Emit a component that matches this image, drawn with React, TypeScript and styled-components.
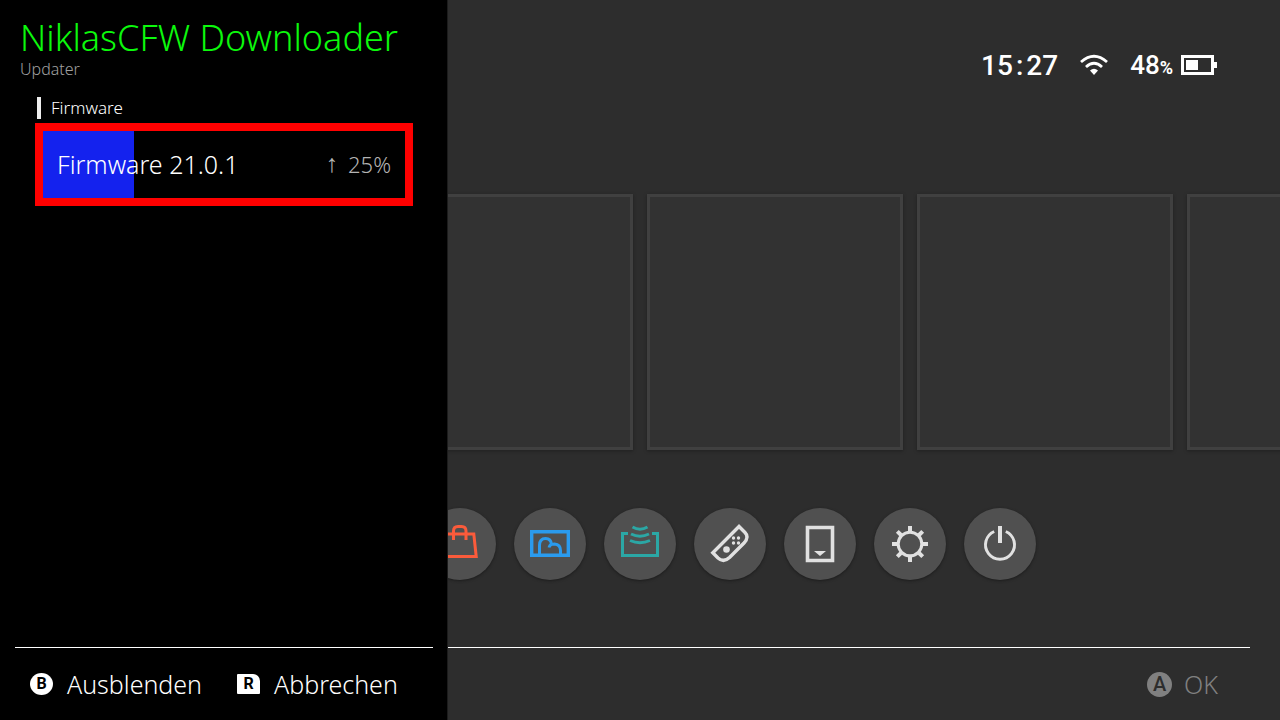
import React from 'react';
import styled, { createGlobalStyle } from 'styled-components';

const GlobalStyle = createGlobalStyle`
  *, *::before, *::after { box-sizing: border-box; }
  body {
    margin: 0;
    background: #2d2d2d;
    color: #fff;
    font-family: "Noto Sans", "Open Sans", sans-serif;
    font-weight: 300;
  }
  button {
    margin: 0;
    padding: 0;
    border: 0;
    background: none;
    color: inherit;
    font: inherit;
    cursor: pointer;
  }
  h1, h2, p, ul { margin: 0; padding: 0; font-weight: inherit; list-style: none; }
`;

const Screen = styled.div`
  display: flex;
  min-height: 100vh;
`;

const Panel = styled.section`
  display: flex;
  flex-direction: column;
  flex: none;
  width: 448px;
  padding: 0 14px 0 15px;
  background: #000;
  border-right: 1px solid #1c1c1c;
`;

const PanelHeader = styled.header`
  padding: 16px 5px 0;
`;

const Title = styled.h1`
  color: #0cf90c;
  font-size: 36px;
  line-height: 44px;
  white-space: nowrap;
`;

const Subtitle = styled.p`
  color: #a0a0a0;
  font-size: 16px;
  line-height: 18px;
`;

const Category = styled.h2`
  margin: 19px 22px 4px;
  padding-left: 10px;
  border-left: 4px solid #eee;
  font-size: 17px;
  line-height: 22px;
`;

const DownloadItem = styled.button`
  position: relative;
  display: flex;
  align-items: center;
  justify-content: space-between;
  margin: 0 20px;
  height: 83px;
  padding: 0 14px 2px;
  border: 8px solid #f00;
`;

const Progress = styled.span`
  position: absolute;
  inset: 0 auto 0 0;
  background: #1422ee;
`;

const ItemName = styled.span`
  position: relative;
  font-size: 25px;
`;

const ItemState = styled.span`
  position: relative;
  display: flex;
  align-items: center;
  gap: 10px;
  color: #b4b4b4;
  font-size: 22px;
`;

const Arrow = styled.span`
  font-family: "Liberation Sans", sans-serif;
  font-size: 25px;
`;

const Footer = styled.footer<{ $end?: boolean }>`
  display: flex;
  justify-content: ${(p) => (p.$end ? 'flex-end' : 'flex-start')};
  gap: 35px;
  height: 73px;
  margin-top: auto;
  padding: 0 ${(p) => (p.$end ? 32 : 15)}px;
  border-top: 1px solid #fff;
`;

const Hint = styled.button<{ $dim?: boolean }>`
  display: flex;
  align-items: center;
  gap: ${(p) => (p.$dim ? 12 : 14)}px;
  color: ${(p) => (p.$dim ? '#808080' : '#fff')};
  font-size: 25px;
  white-space: nowrap;
`;

const Key = styled.span<{ $shoulder?: boolean; $large?: boolean }>`
  display: flex;
  align-items: center;
  justify-content: center;
  width: ${(p) => (p.$large ? 25 : 23)}px;
  height: ${(p) => (p.$large ? 25 : p.$shoulder ? 20 : 22)}px;
  border-radius: ${(p) => (p.$shoulder ? '1px 7px 1px 1px' : '50%')};
  background: currentColor;

  span {
    color: ${(p) => (p.$large ? '#2d2d2d' : '#000')};
    font: ${(p) => (p.$large ? '500 20px' : '700 16px')}/20px Roboto, sans-serif;
  }
`;

const Home = styled.main`
  display: flex;
  flex: 1;
  flex-direction: column;
  min-width: 0;
  overflow: hidden;
`;

const StatusBar = styled.div`
  display: flex;
  align-items: center;
  justify-content: flex-end;
  height: 130px;
  padding-right: 63px;
  font-family: Roboto, sans-serif;
  font-weight: 500;
`;

const Clock = styled.time`
  display: flex;
  gap: 3px;
  margin-right: 22px;
  font-size: 28px;
`;

const Battery = styled.div`
  display: flex;
  align-items: center;
  gap: 8px;
  margin-left: 22px;
  font-size: 26px;

  small { font-size: 18px; font-weight: 700; }
`;

const Tiles = styled.ul`
  display: flex;
  gap: 14px;
  margin: 64px 0 58px -71px;
`;

const Tile = styled.li`
  flex: none;
  width: 256px;
  height: 256px;
  border: 3px solid #404040;
  background: #323232;
  box-shadow: 0 1px 3px #202020;
`;

const Dock = styled.nav`
  display: flex;
  gap: 18px;
  margin: 0 0 40px -24px;
`;

const DockButton = styled.button<{ $color?: string }>`
  flex: none;
  width: 72px;
  height: 72px;
  border-radius: 50%;
  background: #505050;
  box-shadow: 0 1px 3px #1c1c1c;
  color: ${(p) => p.$color ?? '#e1e1e1'};

  svg { display: block; }
`;

const HomeFooter = styled.div`
  display: flex;
  flex-direction: column;
  margin-top: auto;
  padding-right: 30px;
`;

const dockItems: { label: string; color?: string; icon: React.ReactNode }[] = [
  {
    label: 'Nintendo eShop',
    color: '#fb5b3b',
    icon: (
      <>
        <path d="M20.500 26H49.800L52.200 48.500H18Z" />
        <path d="M29.500 32V23Q29.500 18.500 34 18.500H37.500Q42 18.500 42 23V32" />
      </>
    ),
  },
  {
    label: 'Album',
    color: '#2a9bee',
    icon: (
      <>
        <path d="M17.700 23.700H54.300V47.300H17.700Z" strokeWidth="3.400" />
        <path d="M25.500 47V37.500Q25.500 30.500 31.500 30.500Q37 30.500 37.500 36.500Q38.500 36 40.500 36Q46.500 36.500 46.500 42.500V47" />
        <path d="M37.500 36Q35.500 37.500 35 39.500" />
      </>
    ),
  },
  {
    label: 'GameShare',
    color: '#2ba7a5',
    icon: (
      <>
        <path d="M24 25.500H18.500V47.500H53.500V25.500H48" />
        <path d="M28.500 19Q36 23.500 43.500 19M27 26Q36 30.500 45 26M26 32.500Q36 37 46 32.500" />
      </>
    ),
  },
  {
    label: 'Controller',
    icon: (
      <>
        <path d="M45 18.500L18.800 44.700L24 50Q29.500 55 35.500 49.500L50 35Q55.500 29 51 24.500Z" strokeWidth="3.400" />
        <circle cx="32.500" cy="41.500" r="3.300" fill="currentColor" stroke="none" />
        <g fill="currentColor" stroke="none">
          <circle cx="39.500" cy="30" r="1.700" />
          <circle cx="44.500" cy="30" r="1.700" />
          <circle cx="39.500" cy="35" r="1.700" />
          <circle cx="44.500" cy="35" r="1.700" />
        </g>
      </>
    ),
  },
  {
    label: 'Virtual Game Cards',
    icon: (
      <>
        <path d="M23.500 19.500H48.500V52.500H23.500Z" strokeWidth="3.600" />
        <path d="M30 43H42L36 48Z" fill="currentColor" stroke="none" />
      </>
    ),
  },
  {
    label: 'System Settings',
    icon: (
      <>
        <circle cx="36" cy="36" r="11.800" />
        <path
          d="M36 18V25M36 47V54M18 36H25M47 36H54M23.300 23.300L28 28M44 44L48.700 48.700M48.700 23.300L44 28M28 44L23.300 48.700"
          strokeWidth="4"
        />
      </>
    ),
  },
  {
    label: 'Power',
    icon: (
      <>
        <path d="M30.200 23.500A14.500 14.500 0 1 0 41.800 23.500" />
        <path d="M36 18V35" strokeWidth="4" />
      </>
    ),
  },
];

const WifiIcon = () => (
  <svg width="28" height="22" viewBox="0 0 28 22" fill="none" stroke="#fff" strokeWidth="2.800" aria-label="Wi-Fi">
    <path d="M1 8Q14 -3.500 27 8M6 13Q14 5.500 22 13" />
    <path d="M10 16.500Q14 13 18 16.500L14 21Z" fill="#fff" stroke="none" />
  </svg>
);

const BatteryIcon = () => (
  <svg width="36" height="20" viewBox="0 0 36 20" fill="#fff" aria-hidden="true">
    <path d="M0 0H33V7H36V13H33V20H0ZM3 3V17H30V3Z" fillRule="evenodd" />
    <path d="M5 5H17V15H5Z" />
  </svg>
);

const download = { name: 'Firmware 21.0.1', percent: 25 };

export default function App() {
  return (
    <>
      <GlobalStyle />
      <Screen>
        <Panel>
          <PanelHeader>
            <Title>NiklasCFW Downloader</Title>
            <Subtitle>Updater</Subtitle>
          </PanelHeader>
          <Category>Firmware</Category>
          <DownloadItem type="button">
            <Progress style={{ width: `${download.percent}%` }} />
            <ItemName>{download.name}</ItemName>
            <ItemState>
              <Arrow>↑</Arrow>
              <span>{download.percent}%</span>
            </ItemState>
          </DownloadItem>
          <Footer>
            <Hint type="button">
              <Key><span>B</span></Key>
              Ausblenden
            </Hint>
            <Hint type="button">
              <Key $shoulder><span>R</span></Key>
              Abbrechen
            </Hint>
          </Footer>
        </Panel>
        <Home>
          <StatusBar>
            <Clock>
              <span>15</span>
              <span>:</span>
              <span>27</span>
            </Clock>
            <WifiIcon />
            <Battery>
              <span>48<small>%</small></span>
              <BatteryIcon />
            </Battery>
          </StatusBar>
          <Tiles>
            <Tile />
            <Tile />
            <Tile />
            <Tile />
          </Tiles>
          <Dock>
            {dockItems.map((item) => (
              <DockButton key={item.label} type="button" aria-label={item.label} $color={item.color}>
                <svg width="72" height="72" viewBox="0 0 72 72" fill="none" stroke="currentColor" strokeWidth="3">
                  {item.icon}
                </svg>
              </DockButton>
            ))}
          </Dock>
          <HomeFooter>
            <Footer $end>
              <Hint type="button" $dim>
                <Key $large><span>A</span></Key>
                OK
              </Hint>
            </Footer>
          </HomeFooter>
        </Home>
      </Screen>
    </>
  );
}
